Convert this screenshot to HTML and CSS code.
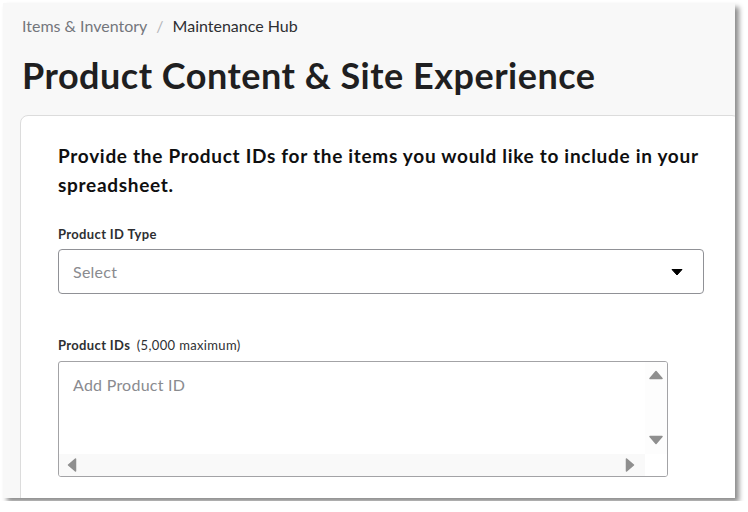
FILE: index.html
```html
<!DOCTYPE html>
<html lang="en">

<head>
    <meta charset="UTF-8">
    <meta name="viewport" content="width=device-width, initial-scale=1.0">
    <title>Product Content &amp; Site Experience</title>
    <link rel="stylesheet" href="styles.css">
</head>

<body>
    <div class="window">
        <div class="crumbs">
            <span class="crumb">Items &amp; Inventory</span>
            <span class="sep">/</span>
            <span class="crumb current">Maintenance Hub</span>
        </div>
        <h1 class="title">Product Content &amp; Site Experience</h1>

        <div class="card">
            <h2 class="lead">Provide the Product IDs for the items you would like to include in your spreadsheet.</h2>

            <div class="field">
                <label class="label">Product ID Type</label>
                <div class="select">
                    <span class="placeholder">Select</span>
                    <svg class="caret" width="12" height="8" viewBox="0 0 12 8">
                        <path d="M1 1.5h10L6 7z" fill="#000" stroke="#000" stroke-width="1" stroke-linejoin="round" />
                    </svg>
                </div>
            </div>

            <div class="field ids">
                <label class="label">Product IDs <span class="hint">(5,000 maximum)</span></label>
                <div class="textbox">
                    <div class="text-area">
                        <span class="placeholder">Add Product ID</span>
                    </div>
                    <div class="vbar">
                        <svg width="16" height="10" viewBox="0 0 16 10">
                            <path d="M2 8.5h12L8 1.5z" fill="#8f8f8f" stroke="#8f8f8f" stroke-width="1.5" stroke-linejoin="round" />
                        </svg>
                        <svg width="16" height="10" viewBox="0 0 16 10">
                            <path d="M2 1.5h12L8 8.5z" fill="#8f8f8f" stroke="#8f8f8f" stroke-width="1.5" stroke-linejoin="round" />
                        </svg>
                    </div>
                    <div class="hbar">
                        <svg width="10" height="16" viewBox="0 0 10 16">
                            <path d="M8.5 2v12L1.5 8z" fill="#8f8f8f" stroke="#8f8f8f" stroke-width="1.5" stroke-linejoin="round" />
                        </svg>
                        <svg width="10" height="16" viewBox="0 0 10 16">
                            <path d="M1.5 2v12L8.5 8z" fill="#8f8f8f" stroke="#8f8f8f" stroke-width="1.5" stroke-linejoin="round" />
                        </svg>
                    </div>
                    <div class="corner"></div>
                </div>
            </div>
        </div>
    </div>
</body>

</html>
```

FILE: styles.css
```css
* {
    margin: 0;
    padding: 0;
    box-sizing: border-box;
}

body {
    background-color: #fff;
    font-family: Lato, "Open Sans", sans-serif;
    color: #1f1f21;
}

.window {
    width: 732px;
    height: 495px;
    margin: 3px;
    background-color: #f8f8f8;
    box-shadow: 4px 4px 5px rgba(0, 0, 0, .45);
    overflow: hidden;
    padding-top: 13px;
}

.crumbs {
    padding-left: 19px;
    font-size: 16px;
    line-height: 20px;
    display: flex;
    gap: 9px;
}

.crumb {
    color: #74767c;
}

.sep {
    color: #b5b6ba;
}

.crumb.current {
    color: #2e2f32;
}

.title {
    padding-left: 19px;
    margin-top: 19px;
    font-size: 36px;
    line-height: 40px;
    letter-spacing: .5px;
    font-weight: 700;
    color: #1f1f21;
}

.card {
    width: 720px;
    height: 420px;
    margin: 20px 0 0 17px;
    background-color: #fff;
    border: 1px solid #dcdcdc;
    border-radius: 8px;
    padding: 25px 37px 0;
}

.lead {
    font-size: 19px;
    line-height: 29px;
    letter-spacing: .7px;
    font-weight: 700;
    color: #0f0f10;
}

.field {
    margin-top: 27px;
}

.field.ids {
    margin-top: 43px;
}

.label {
    display: block;
    font-size: 13px;
    line-height: 16px;
    letter-spacing: .35px;
    font-weight: 700;
    color: #2e2f32;
}

.hint {
    font-weight: 400;
    margin-left: 3px;
}

.select {
    margin-top: 7px;
    width: 646px;
    height: 45px;
    border: 1px solid #909196;
    border-radius: 4px;
    display: flex;
    align-items: center;
    justify-content: space-between;
    padding: 0 20px 0 14px;
}

.placeholder {
    font-size: 16px;
    letter-spacing: .25px;
    color: #8a8b8f;
}

.ids .label {
    margin-bottom: 8px;
}

.textbox {
    width: 610px;
    height: 116px;
    border: 1px solid #a3a3a6;
    border-radius: 3px;
    display: grid;
    grid-template-columns: 1fr 22px;
    grid-template-rows: 1fr 22px;
    overflow: hidden;
}

.text-area {
    padding: 13px 14px;
    line-height: 20px;
}

.vbar {
    background-color: #fdfdfd;
    display: flex;
    flex-direction: column;
    justify-content: space-between;
    align-items: center;
    padding: 8px 0 9px;
}

.vbar svg,
.hbar svg {
    display: block;
}

.hbar {
    background-color: #f9f9f9;
    display: flex;
    justify-content: space-between;
    align-items: center;
    padding: 0 10px 0 8px;
}

.corner {
    background-color: #fff;
}
```
